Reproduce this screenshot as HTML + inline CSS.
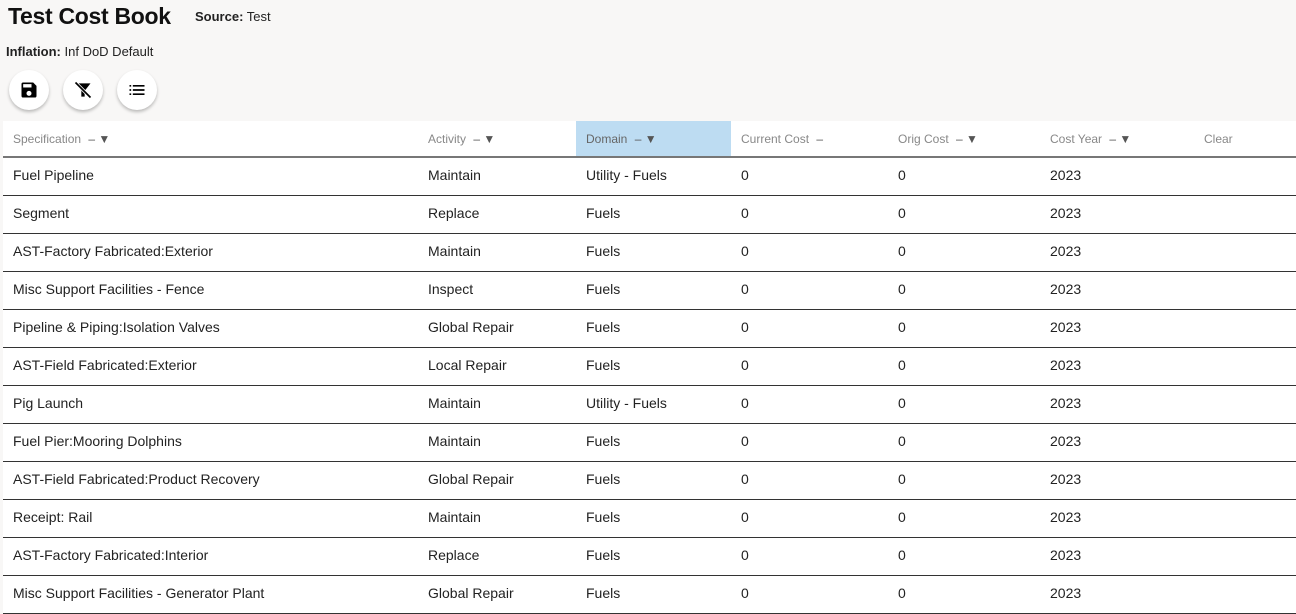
<!DOCTYPE html>
<html><head><style>
body{margin:0;width:1296px;height:613px;overflow:hidden;background:#f8f7f6;font-family:"Liberation Sans",sans-serif;color:#222;}
.title{position:absolute;left:8px;top:3px;font-size:23px;font-weight:bold;color:#111;letter-spacing:-0.3px;}
.src{position:absolute;left:195px;top:9px;font-size:13px;}
.inf{position:absolute;left:6px;top:44px;font-size:13px;}
b{font-weight:bold;}
.btn{position:absolute;top:70px;width:40px;height:40px;border-radius:50%;background:#fff;box-shadow:0 2px 3px rgba(0,0,0,.25);display:flex;align-items:center;justify-content:center;}
table{position:absolute;left:3px;top:121px;width:1293px;border-collapse:collapse;background:#fff;font-size:14px;}
th{height:35px;text-align:left;font-weight:normal;color:#888;font-size:12px;padding:0 0 0 10px;border-bottom:2px solid #777;}
th .m{color:#555;margin-left:4px;}
td{height:37px;padding:0 0 2px 10px;box-sizing:border-box;border-bottom:1px solid #333;color:#222;}
tr:not(:first-child){height:38px;}
.hl{background:#bddcf2;}
</style></head><body>
<div class="title">Test Cost Book</div>
<div class="src"><b>Source:</b> Test</div>
<div class="inf"><b>Inflation:</b> Inf DoD Default</div>
<div class="btn" style="left:9px"><svg width="20" height="20" viewBox="0 0 24 24"><path d="M17 3H5a2 2 0 0 0-2 2v14a2 2 0 0 0 2 2h14a2 2 0 0 0 2-2V7l-4-4zm-5 16a3 3 0 1 1 0-6 3 3 0 0 1 0 6zm3-10H5V5h10v4z" fill="#000"/></svg></div>
<div class="btn" style="left:63px"><svg width="20" height="20" viewBox="0 0 24 24"><path d="M3 4h18l-7 9v7h-4v-7z" fill="#000"/><path d="M3 3l18 18" stroke="#fff" stroke-width="4"/><path d="M3 3l18 18" stroke="#000" stroke-width="2"/></svg></div>
<div class="btn" style="left:117px"><svg width="20" height="20" viewBox="0 0 24 24"><path d="M3 6h2v2H3zm4 0h14v2H7zM3 11h2v2H3zm4 0h14v2H7zM3 16h2v2H3zm4 0h14v2H7z" fill="#000"/></svg></div>
<table>
<tr><th style="width:405px">Specification <span class="m">– ▼</span></th><th style="width:148px">Activity <span class="m">– ▼</span></th><th class="hl" style="width:145px;color:#666">Domain <span class="m">– ▼</span></th><th style="width:147px">Current Cost <span class="m">–</span></th><th style="width:142px">Orig Cost <span class="m">– ▼</span></th><th style="width:144px">Cost Year <span class="m">– ▼</span></th><th>Clear</th></tr>
<tr><td>Fuel Pipeline</td><td>Maintain</td><td>Utility - Fuels</td><td>0</td><td>0</td><td>2023</td><td></td></tr>
<tr><td>Segment</td><td>Replace</td><td>Fuels</td><td>0</td><td>0</td><td>2023</td><td></td></tr>
<tr><td>AST-Factory Fabricated:Exterior</td><td>Maintain</td><td>Fuels</td><td>0</td><td>0</td><td>2023</td><td></td></tr>
<tr><td>Misc Support Facilities - Fence</td><td>Inspect</td><td>Fuels</td><td>0</td><td>0</td><td>2023</td><td></td></tr>
<tr><td>Pipeline &amp; Piping:Isolation Valves</td><td>Global Repair</td><td>Fuels</td><td>0</td><td>0</td><td>2023</td><td></td></tr>
<tr><td>AST-Field Fabricated:Exterior</td><td>Local Repair</td><td>Fuels</td><td>0</td><td>0</td><td>2023</td><td></td></tr>
<tr><td>Pig Launch</td><td>Maintain</td><td>Utility - Fuels</td><td>0</td><td>0</td><td>2023</td><td></td></tr>
<tr><td>Fuel Pier:Mooring Dolphins</td><td>Maintain</td><td>Fuels</td><td>0</td><td>0</td><td>2023</td><td></td></tr>
<tr><td>AST-Field Fabricated:Product Recovery</td><td>Global Repair</td><td>Fuels</td><td>0</td><td>0</td><td>2023</td><td></td></tr>
<tr><td>Receipt: Rail</td><td>Maintain</td><td>Fuels</td><td>0</td><td>0</td><td>2023</td><td></td></tr>
<tr><td>AST-Factory Fabricated:Interior</td><td>Replace</td><td>Fuels</td><td>0</td><td>0</td><td>2023</td><td></td></tr>
<tr><td>Misc Support Facilities - Generator Plant</td><td>Global Repair</td><td>Fuels</td><td>0</td><td>0</td><td>2023</td><td></td></tr>
</table>
</body></html>
